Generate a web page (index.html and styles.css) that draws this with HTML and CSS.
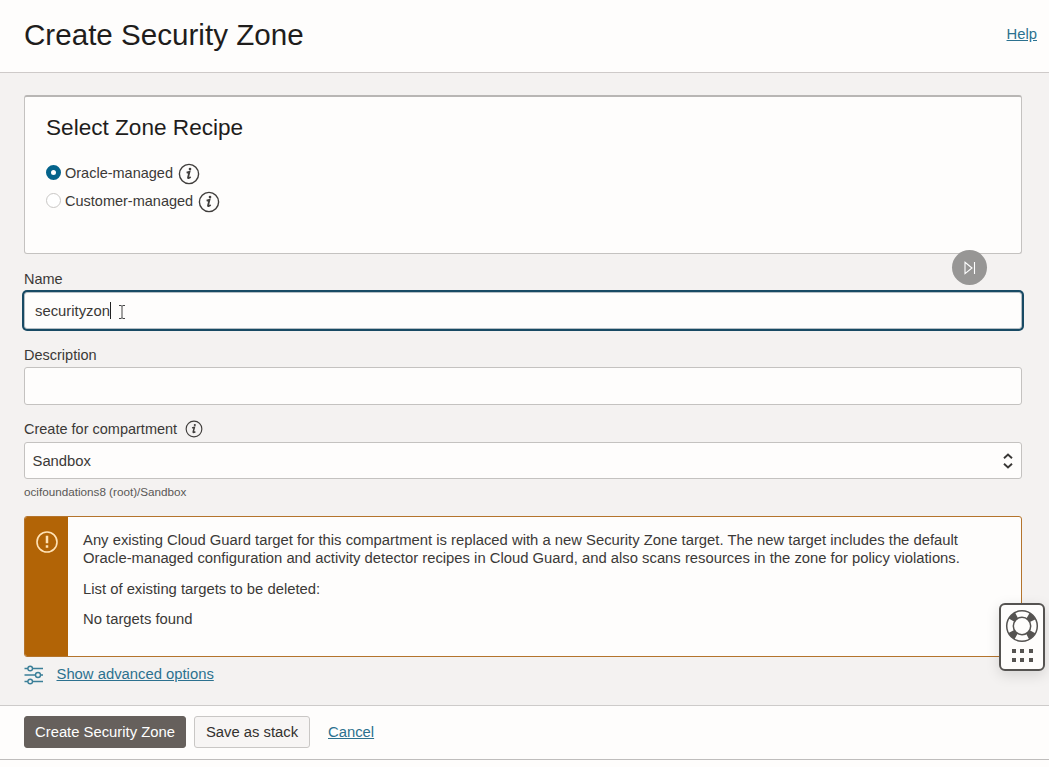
FILE: index.html
```html
<!DOCTYPE html>
<html lang="en">
<head>
<meta charset="utf-8">
<title>Create Security Zone</title>
<link rel="stylesheet" href="styles.css">
</head>
<body>
<header class="header">
  <h1 class="title">Create Security Zone</h1>
  <a class="link" href="#">Help</a>
</header>
<main class="content">
  <section class="recipe">
    <h2 class="recipe-title">Select Zone Recipe</h2>
    <div class="option">
      <span class="radio radio-on"></span><span class="option-label">Oracle-managed</span>
      <svg class="info" viewBox="0 0 22 22"><circle cx="11" cy="11" r="9.6"/><path class="stem" d="M8.6 9.6 L11.5 8.8 L10 14.6 Q9.9 15.9 12.7 14.1"/><circle class="dot" cx="12" cy="6.1" r="1.3"/></svg>
    </div>
    <div class="option">
      <span class="radio"></span><span class="option-label">Customer-managed</span>
      <svg class="info" viewBox="0 0 22 22"><circle cx="11" cy="11" r="9.6"/><path class="stem" d="M8.6 9.6 L11.5 8.8 L10 14.6 Q9.9 15.9 12.7 14.1"/><circle class="dot" cx="12" cy="6.1" r="1.3"/></svg>
    </div>
  </section>

  <div class="label label-name">Name</div>
  <div class="input input-focus">
    <span class="value">securityzon</span><span class="caret"></span>
    <svg class="ibeam" viewBox="0 0 8 16"><path d="M1 1.5H3L4 2.3L5 1.5H7M4 2.3V13.7M1 14.5H3L4 13.7L5 14.5H7"/></svg>
  </div>

  <div class="label label-desc">Description</div>
  <div class="input input-desc"></div>

  <div class="label label-comp">Create for compartment
    <svg class="info info-small" viewBox="0 0 22 22"><circle cx="11" cy="11" r="9.6"/><path class="stem" d="M8.6 9.6 L11.5 8.8 L10 14.6 Q9.9 15.9 12.7 14.1"/><circle class="dot" cx="12" cy="6.1" r="1.3"/></svg>
  </div>
  <div class="input select">
    <span>Sandbox</span>
    <svg class="arrows" viewBox="0 0 10 16"><path d="M1 5.2L5 1.5L9 5.2M1 10.8L5 14.5L9 10.8"/></svg>
  </div>
  <div class="hint">ocifoundations8 (root)/Sandbox</div>

  <section class="alert">
    <div class="alert-side">
      <svg class="alert-icon" viewBox="0 0 22 22"><circle cx="11" cy="11" r="10"/><path d="M11 4.8V12.2M11 14.3V16.8"/></svg>
    </div>
    <div class="alert-body">
      <p>Any existing Cloud Guard target for this compartment is replaced with a new Security Zone target. The new target includes the default<br>Oracle-managed configuration and activity detector recipes in Cloud Guard, and also scans resources in the zone for policy violations.</p>
      <p>List of existing targets to be deleted:</p>
      <p>No targets found</p>
    </div>
  </section>

  <div class="advanced">
    <svg class="sliders" viewBox="0 0 20 20"><path d="M0.5 3.5H4M8.5 3.5H19M0.5 10H11.5M16.5 10H19M0.5 16.5H4M8.5 16.5H19"/><circle cx="6.2" cy="3.5" r="2.3"/><circle cx="14" cy="10" r="2.5"/><circle cx="6.2" cy="16.5" r="2.3"/></svg>
    <a class="link" href="#">Show advanced options</a>
  </div>
</main>
<footer class="footer">
  <button class="button primary">Create Security Zone</button>
  <button class="button">Save as stack</button>
  <a class="link cancel" href="#">Cancel</a>
</footer>

<div class="skip">
  <svg viewBox="0 0 12 14"><path d="M1 1.3L8 7L1 12.7ZM10.5 1V13"/></svg>
</div>
<div class="support">
  <svg class="ring" viewBox="0 0 34 34">
    <circle class="outer" cx="17" cy="17" r="15.3"/><circle class="outer" cx="17" cy="17" r="8.7"/>
    <circle class="blocks" cx="17" cy="17" r="12"/>
  </svg>
  <div class="dots"><i></i><i></i><i></i><i></i><i></i><i></i></div>
</div>
</body>
</html>
```

FILE: styles.css
```css
* { box-sizing: border-box; }
body {
  margin: 0;
  width: 1049px;
  height: 767px;
  overflow: hidden;
  position: relative;
  background: #fefdfc;
  color: #3b3937;
  font: 14.82px/18px "Liberation Sans", Arial, sans-serif;
}
h1, h2, p { margin: 0; font-weight: normal; }
.link { color: #2c718f; text-decoration: underline; }

.header {
  height: 73px;
  padding: 0 12px 0 24px;
  display: flex;
  justify-content: space-between;
  border-bottom: 1px solid #cecac9;
}
.header .link { margin-top: 25px; }
.title { margin-top: 17px; font-size: 29.6px; line-height: 36px; color: #1f1d1c; }

.content {
  height: 632px;
  padding: 22px 27px 0 24px;
  background: #f4f2f1;
}
.recipe {
  height: 159px;
  padding: 19px 21px 0;
  background: #fefdfc;
  border: 1px solid #c4c2c0;
  border-top: 2px solid #b8b6b4;
  border-radius: 3px;
}
.recipe-title { height: 44px; font-size: 22.6px; line-height: 24px; color: #1f1d1c; }
.option { display: flex; align-items: center; height: 28px; font-size: 14.5px; }
.radio {
  width: 15px;
  height: 15px;
  margin: -3px 4px 0 0;
  border: 1px solid #c9c7c5;
  border-radius: 50%;
  background: #fff;
}
.radio-on { border: 5.5px solid #04638b; }
.option-label { margin-top: -2px; }
.info {
  width: 22px;
  height: 22px;
  margin-left: 5px;
  fill: none;
  stroke: #403e3c;
  stroke-width: 1.4;
}
.info .stem { stroke-width: 1.8; }
.info .dot { fill: #403e3c; stroke: none; }
.info-small { width: 18px; height: 18px; margin-left: 8px; }

.label { display: flex; align-items: center; height: 18px; font-size: 14.5px; }
.label-name { margin-top: 16px; }
.input {
  height: 38px;
  border: 1px solid #c4c2c0;
  border-radius: 3px;
  background: #fefdfc;
}
.input-focus {
  display: flex;
  align-items: center;
  height: 37px;
  margin-top: 4px;
  padding-left: 10px;
  border-color: #b5bec4;
  box-shadow: 0 0 0 2px #184a64;
}
.caret { width: 1px; height: 17px; background: #222; }
.ibeam { width: 8px; height: 16px; margin: 2px 0 0 7px; fill: none; stroke: #444; stroke-width: 1; }
.label-desc { margin-top: 17px; }
.input-desc { margin-top: 3px; }
.label-comp { margin-top: 15px; }
.select {
  display: flex;
  align-items: center;
  justify-content: space-between;
  height: 37px;
  margin-top: 4px;
  padding: 0 8px 0 7.5px;
}
.arrows { width: 10px; height: 16px; fill: none; stroke: #393735; stroke-width: 1.9; }
.hint { margin-top: 4px; font-size: 11.7px; color: #5a5856; }

.alert {
  display: flex;
  height: 141px;
  margin-top: 15px;
  border: 1px solid #b4742c;
  border-radius: 3px;
  background: #fefdfc;
  overflow: hidden;
}
.alert-side { width: 43px; background: #b26406; }
.alert-icon { display: block; width: 22px; height: 22px; margin: 14px 0 0 11px; fill: none; stroke: #ffe2b5; stroke-width: 1.6; }
.alert-icon path { stroke-width: 2.5; }
.alert-body { padding: 14px 0 0 15px; white-space: nowrap; }
.alert-body p + p { margin-top: 12.5px; }

.advanced { display: flex; align-items: center; margin-top: 8px; }
.advanced .link { margin-top: -2px; }
.sliders { width: 20px; height: 20px; margin-right: 12.5px; fill: none; stroke: #3b7f98; stroke-width: 1.4; }

.footer {
  display: flex;
  align-items: center;
  gap: 8px;
  height: 55px;
  padding: 0 0 2px 24px;
  border-top: 1px solid #cdcbca;
  border-bottom: 1px solid #bfbdbc;
}
.button {
  height: 32px;
  width: 116px;
  padding: 0;
  border: 1px solid #c9c7c5;
  border-radius: 3px;
  background: #f7f5f4;
  color: #33312f;
  font: inherit;
}
.primary { width: 162px; border-color: #66605c; background: #66605c; color: #fff; }
.cancel { margin-left: 10px; }

.skip {
  position: absolute;
  left: 952px;
  top: 250px;
  width: 35px;
  height: 35px;
  display: grid;
  place-items: center;
  border-radius: 50%;
  background: #979695;
}
.skip svg { width: 12px; height: 14px; fill: none; stroke: #fff; stroke-width: 1.1; }
.support {
  position: absolute;
  left: 999px;
  top: 603px;
  width: 46px;
  height: 68px;
  display: flex;
  flex-direction: column;
  align-items: center;
  border: 2px solid #555351;
  border-radius: 6px;
  background: #fefdfc;
  box-shadow: 0 4px 14px rgba(0, 0, 0, .13);
}
.ring { width: 34px; height: 34px; margin-top: 4px; fill: none; }
.outer { stroke: #555351; stroke-width: 1.5; }
.blocks { stroke: #555351; stroke-width: 6.5; stroke-dasharray: 6.8 12.05; stroke-dashoffset: -6.025; }
.dots { display: grid; grid-template-columns: repeat(3, 4px); gap: 4.5px; margin-top: 6px; }
.dots i { width: 4px; height: 4px; background: #555351; }
```
